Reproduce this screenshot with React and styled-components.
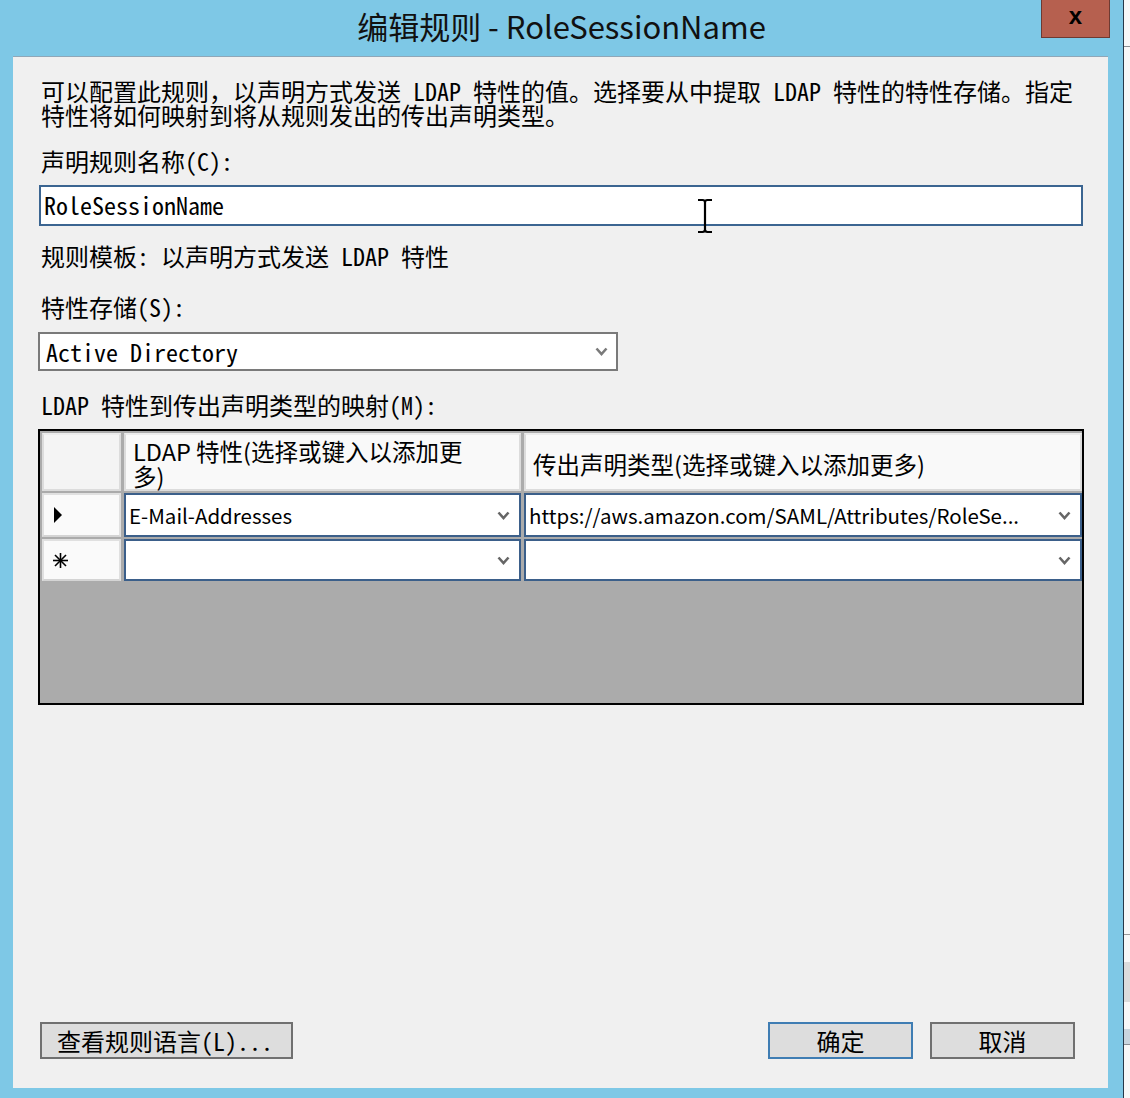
import React from 'react';
import styled, { createGlobalStyle } from 'styled-components';

const MONO = `"Noto Sans Mono CJK SC", "Noto Sans CJK SC", "Liberation Mono", monospace`;
const UI = `"Noto Sans CJK SC", "Noto Sans", sans-serif`;

const GlobalStyle = createGlobalStyle`
  html, body { margin: 0; padding: 0; }
  body {
    width: 1130px;
    height: 1098px;
    overflow: hidden;
    background: #f7f7f7;
    font-family: ${UI};
  }
`;

const Screen = styled.div`
  display: flex;
  width: 1130px;
  height: 1098px;
`;

const Window = styled.div`
  flex: none;
  width: 1123px;
  height: 1098px;
  background: #7ec8e6;
  border-right: 1px solid #26394a;
  display: flex;
  flex-direction: column;
`;

const Backdrop = styled.div`
  flex: 1;
  display: flex;
  flex-direction: column;
  background: #f8f8f8;
`;

const BackLine = styled.div`
  margin-top: ${(p) => p.$top}px;
  height: ${(p) => p.$h || 1}px;
  background: ${(p) => p.$color || '#8a8f94'};
`;

const TitleBar = styled.div`
  height: 56px;
  flex: none;
  display: grid;
  grid-template-columns: 1fr auto 1fr;
  align-items: start;
`;

const Title = styled.div`
  grid-column: 2;
  font-family: ${UI};
  font-size: 31px;
  line-height: 52px;
  color: #111;
  white-space: nowrap;
`;

const CloseButton = styled.div`
  grid-column: 3;
  justify-self: end;
  margin-right: 13px;
  width: 67px;
  height: 37px;
  background: #b6604f;
  border: 1px solid #6e3a32;
  border-top: none;
  display: flex;
  align-items: center;
  justify-content: center;
  font-family: "Liberation Sans", sans-serif;
  font-weight: bold;
  font-size: 24px;
  color: #000;
  line-height: 1;
  padding-bottom: 6px;
  box-sizing: border-box;
  height: 38px;
  width: 69px;
`;

const Client = styled.div`
  flex: 1;
  margin: 0 15px 10px 13px;
  background: #f0f0f0;
  border-top: 1px solid #8fa7b8;
  display: flex;
  flex-direction: column;
  padding: 22px 25px 29px 26px;
  box-sizing: border-box;
  min-height: 0;
`;

const Text = styled.div`
  font-family: ${MONO};
  font-size: 24px;
  line-height: 24px;
  color: #000;
  margin-left: 2px;
  margin-top: ${(p) => p.$mt || 0}px;
  white-space: nowrap;
`;

const TextBox = styled.div`
  position: relative;
  margin-top: ${(p) => p.$mt}px;
  height: 41px;
  width: 1044px;
  box-sizing: border-box;
  background: #fff;
  border: 2px solid #3b6591;
  display: flex;
  align-items: center;
  padding: 0 0 3px 3px;
  font-family: ${MONO};
  font-size: 24px;
  color: #000;
`;

const Cursor = styled.svg`
  position: absolute;
  left: 655px;
  top: 11px;
`;

const Select = styled.div`
  margin-top: ${(p) => p.$mt}px;
  margin-left: -1px;
  height: 39px;
  width: 580px;
  box-sizing: border-box;
  background: #fff;
  border: 2px solid #7a7a7a;
  display: flex;
  align-items: center;
  justify-content: space-between;
  padding: 0 8px 0 6px;
  font-family: ${MONO};
  font-size: 24px;
  color: #000;
`;

const Grid = styled.div`
  margin-top: ${(p) => p.$mt}px;
  margin-left: -1px;
  width: 1046px;
  height: 276px;
  box-sizing: border-box;
  border: 2px solid #000;
  background: #ababab;
  padding: 2px;
  display: grid;
  grid-template-columns: 79px 397px 558px;
  grid-template-rows: 58px 46px 44px;
  column-gap: 3px;
  align-content: start;
`;

const HeaderCell = styled.div`
  background: ${(p) => (p.$corner ? '#f4f4f4' : '#f9f9f9')};
  border: 2px solid #dcdcdc;
  border-top-color: #ececec;
  box-sizing: border-box;
  display: flex;
  align-items: center;
  padding: 4px 0 0 7px;
  font-family: ${UI};
  font-size: 23.5px;
  line-height: 25px;
  color: #000;
`;

const HeaderLabel = styled.div`
  max-width: ${(p) => p.$maxWidth || 'none'};
`;

const RowHead = styled.div`
  background: #fafafa;
  border: 2px solid #e0e0e0;
  border-bottom-color: #d4d4d4;
  box-sizing: border-box;
  display: flex;
  align-items: center;
  padding-left: 8px;
  margin-top: 2px;
`;

const Cell = styled.div`
  margin-top: 2px;
  background: #fff;
  border: 2px solid #3b5f8a;
  box-sizing: border-box;
  display: flex;
  align-items: center;
  justify-content: space-between;
  padding: 0 9px 0 3px;
  font-family: ${UI};
  font-size: 20.5px;
  color: #000;
  white-space: nowrap;
  overflow: hidden;
`;

const Spacer = styled.div`
  flex: 1;
`;

const ButtonRow = styled.div`
  display: flex;
  justify-content: space-between;
  align-items: center;
`;

const ButtonGroup = styled.div`
  display: flex;
  gap: 17px;
  margin-right: ${(p) => p.$mr || 0}px;
  margin-left: ${(p) => p.$ml || 0}px;
`;

const Button = styled.div`
  width: ${(p) => p.$w}px;
  height: 37px;
  box-sizing: border-box;
  background: #dddddd;
  border: 2px solid ${(p) => (p.$primary ? '#3f7db3' : '#707070')};
  display: flex;
  align-items: center;
  justify-content: ${(p) => (p.$left ? 'flex-start' : 'center')};
  padding-left: ${(p) => (p.$left ? 15 : 0)}px;
  font-family: ${MONO};
  font-size: 24px;
  color: #000;
  white-space: nowrap;
`;

const Chevron = ({ color = '#666' }) => (
  <svg width="13" height="9" viewBox="0 0 13 9">
    <polyline points="1.5,1.5 6.5,7 11.5,1.5" fill="none" stroke={color} strokeWidth="2.6" />
  </svg>
);

const RowArrow = () => (
  <svg width="12" height="18" viewBox="0 0 12 18">
    <polygon points="2,1 10,9 2,17" fill="#000" />
  </svg>
);

const NewRowStar = () => (
  <svg width="17" height="17" viewBox="0 0 17 17">
    <g stroke="#000" strokeWidth="1.6">
      <line x1="8.5" y1="1" x2="8.5" y2="16" />
      <line x1="1" y1="8.5" x2="16" y2="8.5" />
      <line x1="3" y1="3" x2="14" y2="14" />
      <line x1="14" y1="3" x2="3" y2="14" />
    </g>
  </svg>
);

const IBeam = () => (
  <Cursor width="18" height="36" viewBox="0 0 18 36">
    <path
      d="M2 2 H6.5 Q9 2 9 4.5 Q9 2 11.5 2 H16 M9 4 V32 M2 34 H6.5 Q9 34 9 31.5 Q9 34 11.5 34 H16"
      fill="none"
      stroke="#000"
      strokeWidth="2.2"
    />
  </Cursor>
);

export default function App() {
  return (
    <Screen>
      <GlobalStyle />
      <Window>
        <TitleBar>
          <Title>编辑规则 - RoleSessionName</Title>
          <CloseButton>x</CloseButton>
        </TitleBar>
        <Client>
          <Text>
            可以配置此规则，以声明方式发送 LDAP 特性的值。选择要从中提取 LDAP 特性的特性存储。指定
            <br />
            特性将如何映射到将从规则发出的传出声明类型。
          </Text>
          <Text $mt={22}>声明规则名称(C):</Text>
          <TextBox $mt={12}>
            RoleSessionName
            <IBeam />
          </TextBox>
          <Text $mt={18}>规则模板: 以声明方式发送 LDAP 特性</Text>
          <Text $mt={27}>特性存储(S):</Text>
          <Select $mt={13}>
            <span>Active Directory</span>
            <Chevron color="#7a7a7a" />
          </Select>
          <Text $mt={22}>LDAP 特性到传出声明类型的映射(M):</Text>
          <Grid $mt={12}>
            <HeaderCell $corner />
            <HeaderCell>
              <HeaderLabel $maxWidth="340px">LDAP 特性(选择或键入以添加更多)</HeaderLabel>
            </HeaderCell>
            <HeaderCell>
              <HeaderLabel>传出声明类型(选择或键入以添加更多)</HeaderLabel>
            </HeaderCell>

            <RowHead>
              <RowArrow />
            </RowHead>
            <Cell>
              <span>E-Mail-Addresses</span>
              <Chevron />
            </Cell>
            <Cell>
              <span>https://aws.amazon.com/SAML/Attributes/RoleSe...</span>
              <Chevron />
            </Cell>

            <RowHead>
              <NewRowStar />
            </RowHead>
            <Cell>
              <span />
              <Chevron />
            </Cell>
            <Cell>
              <span />
              <Chevron />
            </Cell>
          </Grid>
          <Spacer />
          <ButtonRow>
            <ButtonGroup $ml={1}>
              <Button $w={253} $left>查看规则语言(L)...</Button>
            </ButtonGroup>
            <ButtonGroup $mr={8}>
              <Button $w={145} $primary>确定</Button>
              <Button $w={145}>取消</Button>
            </ButtonGroup>
          </ButtonRow>
        </Client>
      </Window>
      <Backdrop>
        <BackLine $top={46} />
        <BackLine $top={887} $color="#9a9a9a" />
        <BackLine $top={27} $h={40} $color="#dcdcdc" />
        <BackLine $top={27} $h={15} $color="#c9d5de" />
        <BackLine $top={0} $color="#8a8f94" />
      </Backdrop>
    </Screen>
  );
}
